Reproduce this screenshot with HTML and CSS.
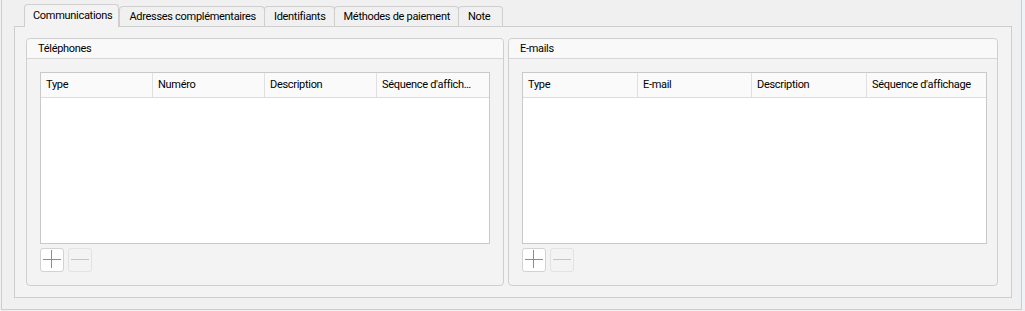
FILE: index.html
```html
<!DOCTYPE html>
<html lang="fr">
  <head>
    <meta charset="UTF-8" />
    <meta name="viewport" content="width=device-width, initial-scale=1.0" />
    <title>Communications</title>
    <link rel="stylesheet" href="styles.css">
  </head>
  <body>
    <div class="window">
      <div class="tabs">
        <div class="tab active">Communications</div>
        <div class="tab">Adresses complémentaires</div>
        <div class="tab">Identifiants</div>
        <div class="tab">Méthodes de paiement</div>
        <div class="tab last">Note</div>
      </div>
      <div class="pane">
        <div class="group">
          <div class="group-title">Téléphones</div>
          <div class="group-body">
            <div class="grid">
              <div class="grid-head cols-phone">
                <div class="cell">Type</div>
                <div class="cell">Numéro</div>
                <div class="cell">Description</div>
                <div class="cell">Séquence d'affichage</div>
              </div>
              <div class="grid-rows"></div>
            </div>
            <div class="actions">
              <button class="tool add" type="button" title="Ajouter"></button>
              <button class="tool remove" type="button" title="Supprimer" disabled></button>
            </div>
          </div>
        </div>
        <div class="group">
          <div class="group-title">E-mails</div>
          <div class="group-body narrow-right">
            <div class="grid">
              <div class="grid-head cols-mail">
                <div class="cell">Type</div>
                <div class="cell">E-mail</div>
                <div class="cell">Description</div>
                <div class="cell">Séquence d'affichage</div>
              </div>
              <div class="grid-rows"></div>
            </div>
            <div class="actions">
              <button class="tool add" type="button" title="Ajouter"></button>
              <button class="tool remove" type="button" title="Supprimer" disabled></button>
            </div>
          </div>
        </div>
      </div>
    </div>
  </body>
</html>
```

FILE: styles.css
```css
html,
body {
  margin: 0;
  height: 100%;
}
body {
  background-color: #f0f0f0;
  font-family: Roboto, "Noto Sans", sans-serif;
  font-size: 11px;
  letter-spacing: -0.3px;
  color: #000;
  overflow: hidden;
}
.window {
  box-sizing: border-box;
  width: 1021px;
  height: 310px;
  margin-left: 1px;
  padding: 4px 9px 0 12px;
  border: 1px solid #cdcdcd;
  border-top: none;
  background-color: #f0f0f0;
  box-shadow: 3px 0 0 #eef3f8;
}
.tabs {
  display: flex;
  align-items: flex-end;
  height: 22px;
  padding-left: 10px;
}
.tab {
  box-sizing: border-box;
  height: 20px;
  padding: 2px 8px 0 9px;
  margin-right: -1px;
  border: 1px solid #cfcfcf;
  border-bottom: none;
  border-radius: 4px 4px 0 0;
  background-color: #f0f0f0;
  white-space: nowrap;
  line-height: 16px;
}
.tab.last {
  padding-right: 12px;
}
.tab.active {
  position: relative;
  height: 23px;
  margin-bottom: -1px;
  margin-right: 0;
  padding: 3px 6px 0 8px;
  background-color: #f3f3f3;
  z-index: 1;
}
.pane {
  box-sizing: border-box;
  height: 272px;
  display: grid;
  grid-template-columns: 478px 490px;
  column-gap: 4px;
  padding: 11px 13px 11px 11px;
  border: 1px solid #cdcdcd;
  background-color: #f3f3f3;
}
.group {
  display: flex;
  flex-direction: column;
  border: 1px solid #cfcfcf;
  border-radius: 4px;
  background-color: #f3f3f3;
}
.group-title {
  height: 19px;
  line-height: 19px;
  padding-left: 11px;
  border-bottom: 1px solid #d6d6d6;
  border-radius: 4px 4px 0 0;
  background-color: #f9f9f9;
}
.group-body {
  flex: 1;
  display: flex;
  flex-direction: column;
  padding: 13px;
}
.group-body.narrow-right {
  padding-right: 10px;
}
.grid {
  flex: 1;
  display: flex;
  flex-direction: column;
  border: 1px solid #c9c9c9;
  background-color: #fff;
}
.grid-head {
  display: grid;
  height: 24px;
  border-bottom: 1px solid #dcdcdc;
  background-color: #fafafa;
}
.cols-phone {
  grid-template-columns: 112px 112px 112px 1fr;
}
.cols-phone .cell:last-child {
  padding-right: 14px;
}
.cols-mail {
  grid-template-columns: 115px 114px 115px 1fr;
}
.cell {
  padding-left: 5px;
  padding-right: 4px;
  line-height: 24px;
  border-right: 1px solid #e0e0e0;
  white-space: nowrap;
  overflow: hidden;
  text-overflow: ellipsis;
}
.cell:last-child {
  border-right: none;
}
.grid-rows {
  flex: 1;
}
.actions {
  display: flex;
  gap: 4px;
  margin-top: 4px;
}
.tool {
  position: relative;
  box-sizing: border-box;
  width: 24px;
  height: 24px;
  padding: 0;
  border: 1px solid #d2d2d2;
  border-radius: 3px;
  background-color: #fff;
}
.tool::before,
.tool::after {
  content: "";
  position: absolute;
}
.tool::before {
  left: 2px;
  top: 10px;
  width: 18px;
  height: 1px;
}
.add::before {
  background-color: #45b866;
}
.add::after {
  left: 10px;
  top: 1px;
  width: 1px;
  height: 18px;
  background-color: #45b866;
}
.remove {
  border-color: #e2e2e2;
  background-color: #f3f3f3;
}
.remove::before {
  background-color: #c4c4c4;
}
```
